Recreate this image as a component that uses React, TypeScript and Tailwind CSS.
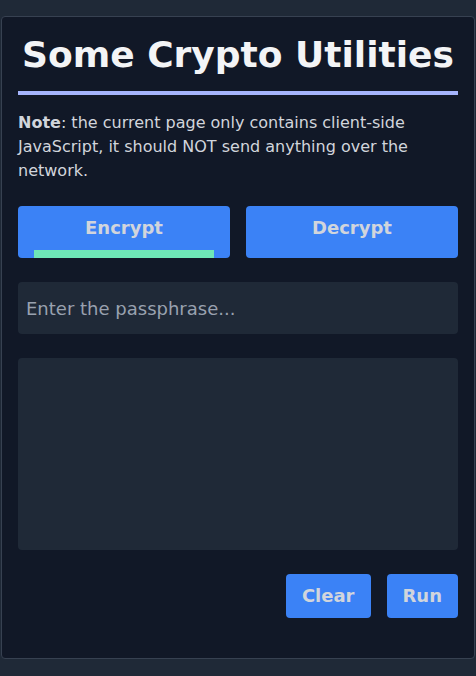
export default function App() {
  return (
    <div
      className="min-h-screen bg-[#1f2937] px-px pt-4"
      style={{ fontFamily: '"DejaVu Sans", Verdana, sans-serif' }}
    >
      <div className="rounded border border-[#374151] bg-[#111827] px-4 pt-[18px] pb-10">
        <h1 className="border-b-4 border-[#a5b4fc] pb-4 text-center text-4xl font-bold text-gray-100">
          Some Crypto Utilities
        </h1>
        <p className="mt-4 text-base leading-6 text-gray-300">
          <strong>Note</strong>: the current page only contains client-side JavaScript, it should NOT send anything over the network.
        </p>

        <div className="mt-[23px] grid grid-cols-2 gap-4">
          <button className="flex flex-col rounded bg-[#3b82f6] pt-2 text-lg font-bold text-gray-300">
            <span className="leading-7">Encrypt</span>
            <span className="mx-4 mt-2 h-2 bg-[#6ee7b7]"></span>
          </button>
          <button className="flex flex-col rounded bg-[#3b82f6] pt-2 text-lg font-bold text-gray-300">
            <span className="leading-7">Decrypt</span>
            <span className="mx-4 mt-2 h-2"></span>
          </button>
        </div>

        <input
          type="password"
          placeholder="Enter the passphrase..."
          className="mt-6 block h-[52px] w-full rounded bg-[#1f2937] px-2 text-lg text-gray-200 placeholder:text-gray-400 outline-none"
        />

        <textarea className="mt-6 block h-48 w-full resize-none rounded bg-[#1f2937] p-2 text-gray-200 outline-none"></textarea>

        <div className="mt-6 flex justify-end gap-4">
          <button className="h-11 rounded bg-[#3b82f6] px-4 text-lg font-bold text-gray-300">Clear</button>
          <button className="h-11 rounded bg-[#3b82f6] px-4 text-lg font-bold text-gray-300">Run</button>
        </div>
      </div>
    </div>
  );
}
